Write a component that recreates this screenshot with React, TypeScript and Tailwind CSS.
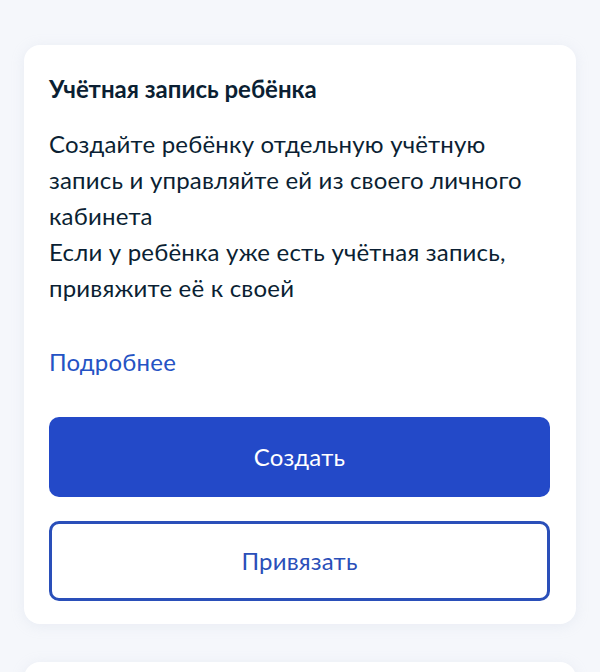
export default function App() {
  return (
    <div className="h-[672px] overflow-hidden bg-[#f5f7fb] px-6 pt-[45px] font-['Lato','Noto_Sans',sans-serif] text-[#0b1f33]">
      <section className="rounded-2xl bg-white pl-[25px] pr-[26px] pt-[28px] pb-[23px] shadow-[0_2px_14px_rgba(180,190,210,0.18)]">
        <h2 className="text-[24px] font-bold leading-[32px]">Учётная запись ребёнка</h2>
        <p className="mt-[21px] text-[24px] leading-[36px] tracking-[0.2px]">
          Создайте ребёнку отдельную учётную запись и управляйте ей из своего личного кабинета
        </p>
        <p className="text-[24px] leading-[36px] tracking-[0.2px]">
          Если у ребёнка уже есть учётная запись, привяжите её к своей
        </p>
        <a href="#" className="mt-[38px] block text-[24px] leading-[36px] tracking-[0.2px] text-[#2553c4]">
          Подробнее
        </a>
        <div className="mt-[37px] flex flex-col gap-6">
          <button className="h-[80px] w-full rounded-[10px] bg-[#2349c8] text-[24px] tracking-[0.2px] text-white">
            Создать
          </button>
          <button className="h-[80px] w-full rounded-[10px] border-[3px] border-[#2a4fb9] bg-white text-[24px] tracking-[0.2px] text-[#2a4fb9]">
            Привязать
          </button>
        </div>
      </section>
      <section className="mt-[38px] h-[40px] rounded-t-2xl bg-white shadow-[0_2px_14px_rgba(180,190,210,0.18)]" />
    </div>
  );
}
